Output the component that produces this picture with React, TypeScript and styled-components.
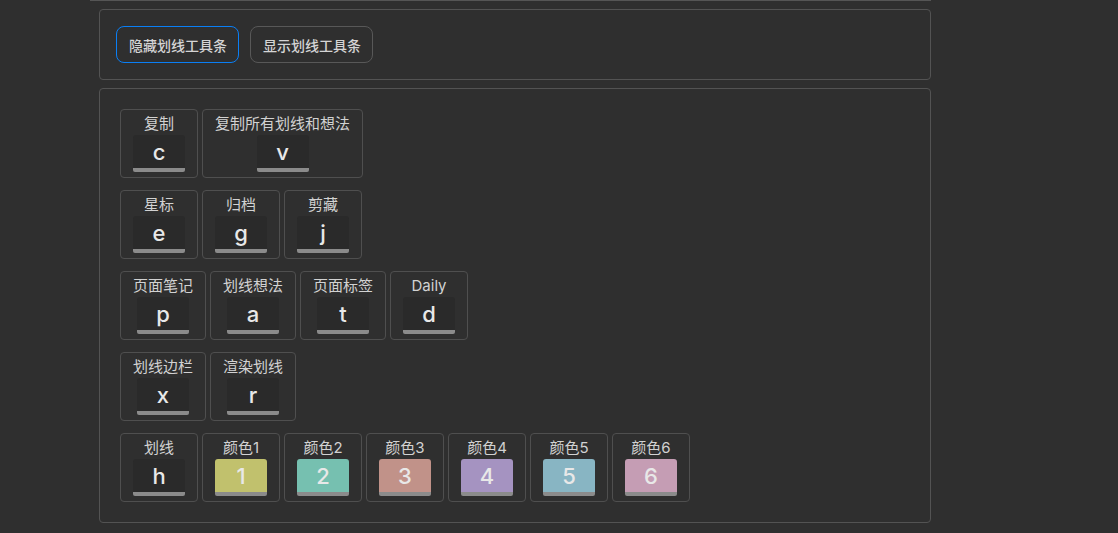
import React from "react";
import styled, { createGlobalStyle } from "styled-components";

const Global = createGlobalStyle`
  html, body { margin: 0; padding: 0; background: #2f2f2f; }
  body { font-family: Inter, "Noto Sans CJK SC", sans-serif; }
`;

const Page = styled.div`
  min-height: 533px;
  background: #2f2f2f;
  padding-left: 90px;
  box-sizing: border-box;
`;

const Column = styled.div`
  width: 841px;
  border-top: 1px solid #555;
  display: flex;
  flex-direction: column;
  gap: 8px;
  padding-top: 8px;
  padding-left: 9px;
  box-sizing: border-box;
`;

const Panel = styled.section<{ $pad: number; $gap?: number }>`
  border: 1px solid #535353;
  border-radius: 4px;
  padding: ${(p) => p.$pad}px;
  display: flex;
  flex-direction: column;
  gap: ${(p) => p.$gap ?? 0}px;
`;

const ButtonRow = styled.div`
  display: flex;
  gap: 11px;
`;

const ToggleButton = styled.button<{ $active?: boolean }>`
  height: 37px;
  padding: 0 11px 0 12px;
  background: transparent;
  border: 1px solid ${(p) => (p.$active ? "#0a7ff5" : "#585858")};
  border-radius: 8px;
  color: #d4d4d4;
  font-family: Inter, "Noto Sans CJK SC", sans-serif;
  font-size: 14px;
  font-weight: 500;
`;

const KeyRow = styled.div`
  display: flex;
  gap: 4px;
`;

const Card = styled.div`
  border: 1px solid #4f4f4f;
  border-radius: 4px;
  padding: 3px 12px 5px;
  height: 69px;
  box-sizing: border-box;
  display: flex;
  flex-direction: column;
  align-items: center;
`;

const Label = styled.div`
  font-size: 15px;
  line-height: 22px;
  color: #d2d2d2;
  white-space: nowrap;
`;

const Cap = styled.div<{ $color?: string }>`
  width: 52px;
  height: 37px;
  box-sizing: border-box;
  background: ${(p) => p.$color ?? "#2a2a2a"};
  border-radius: 3px 3px 2px 2px;
  border-bottom: 4px solid #8b8b8b;
  display: flex;
  align-items: center;
  justify-content: center;
  color: #e8e8e8;
  font-size: 22px;
  font-weight: 500;
  font-family: Inter, "Liberation Sans", sans-serif;
  line-height: 1;
  padding-top: 1px;
`;

type K = { label: string; key: string; color?: string };

const rows: K[][] = [
  [
    { label: "复制", key: "c" },
    { label: "复制所有划线和想法", key: "v" },
  ],
  [
    { label: "星标", key: "e" },
    { label: "归档", key: "g" },
    { label: "剪藏", key: "j" },
  ],
  [
    { label: "页面笔记", key: "p" },
    { label: "划线想法", key: "a" },
    { label: "页面标签", key: "t" },
    { label: "Daily", key: "d" },
  ],
  [
    { label: "划线边栏", key: "x" },
    { label: "渲染划线", key: "r" },
  ],
  [
    { label: "划线", key: "h" },
    { label: "颜色1", key: "1", color: "#c1c16d" },
    { label: "颜色2", key: "2", color: "#76c0b0" },
    { label: "颜色3", key: "3", color: "#c19289" },
    { label: "颜色4", key: "4", color: "#a593c1" },
    { label: "颜色5", key: "5", color: "#88b5c3" },
    { label: "颜色6", key: "6", color: "#c59db4" },
  ],
];

export default function App() {
  return (
    <Page>
      <Global />
      <Column>
        <Panel $pad={16}>
          <ButtonRow>
            <ToggleButton $active>隐藏划线工具条</ToggleButton>
            <ToggleButton>显示划线工具条</ToggleButton>
          </ButtonRow>
        </Panel>
        <Panel $pad={20} $gap={12}>
          {rows.map((row, i) => (
            <KeyRow key={i}>
              {row.map((k) => (
                <Card key={k.label}>
                  <Label>{k.label}</Label>
                  <Cap $color={k.color}>{k.key}</Cap>
                </Card>
              ))}
            </KeyRow>
          ))}
        </Panel>
      </Column>
    </Page>
  );
}
